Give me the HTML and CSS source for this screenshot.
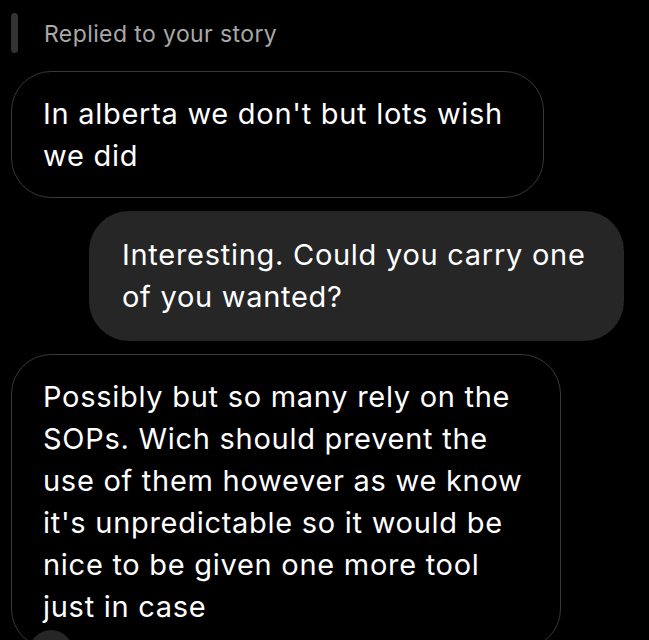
FILE: index.html
```html
<!DOCTYPE html>
<html>
<head>
<meta charset="utf-8">
<link rel="stylesheet" href="styles.css">
</head>
<body>
<div class="thread">
  <div class="reply-label">
    <span class="reply-bar"></span>
    <span class="reply-text">Replied to your story</span>
  </div>
  <div class="msg msg-in first">In alberta we don't but lots wish we did</div>
  <div class="msg msg-out">Interesting. Could you carry one of you wanted?</div>
  <div class="msg msg-in last">Possibly but so many rely on the SOPs. Wich should prevent the use of them however as we know it's unpredictable so it would be nice to be given one more tool just in case
    <span class="reaction"></span>
  </div>
</div>
</body>
</html>
```
FILE: styles.css
```css
html, body {
  margin: 0;
  padding: 0;
  background: #000;
  overflow: hidden;
}
body {
  width: 649px;
  height: 640px;
  font-family: Inter, Roboto, "Liberation Sans", sans-serif;
  color: #fff;
}
.thread {
  display: flex;
  flex-direction: column;
  padding: 13px 0 0 11px;
}
.reply-label {
  display: flex;
  align-items: center;
  gap: 26px;
  height: 40px;
}
.reply-bar {
  width: 7px;
  height: 40px;
  border-radius: 4px;
  background: #333;
}
.reply-text {
  color: #a8a8a8;
  font-size: 23px;
  letter-spacing: 0.4px;
  line-height: 40px;
  padding-top: 2px;
}
.msg {
  font-size: 29px;
  letter-spacing: 0.72px;
  line-height: 42px;
  border-radius: 40px;
  box-sizing: border-box;
  position: relative;
}
.msg-in {
  border: 1.5px solid #383838;
  padding: 20.5px 31px;
  align-self: flex-start;
}
.first {
  margin-top: 18px;
  width: 533px;
}
.msg-out {
  background: #262626;
  padding: 23px 33px;
  width: 535px;
  margin-top: 13px;
  margin-left: 78px;
}
.last {
  margin-top: 13px;
  width: 550px;
}
.reaction {
  position: absolute;
  left: 17px;
  bottom: -26px;
  width: 44px;
  height: 44px;
  border-radius: 50%;
  background: #262626;
}
```
